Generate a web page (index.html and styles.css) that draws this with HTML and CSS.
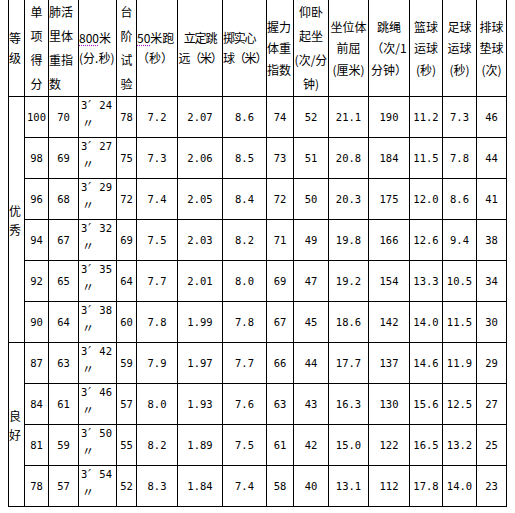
FILE: index.html
```html
<!DOCTYPE html>
<html lang="zh-CN">
<head>
<meta charset="utf-8">
<title>体质测试评分标准</title>
<link rel="stylesheet" href="styles.css">
</head>
<body>
<table class="grid">
  <colgroup>
    <col class="c16"><col class="c24"><col class="c30"><col class="c38"><col class="c20">
    <col class="c41"><col class="c45"><col class="c44"><col class="c27"><col class="c35">
    <col class="c40"><col class="c41"><col class="c33"><col class="c34"><col class="c30">
  </colgroup>
  <thead>
    <tr class="head">
      <th class="h2 left">等<br>级</th>
      <th class="h4">单<br>项<br>得<br>分</th>
      <th class="h4 left">肺活<br>里体<br>重指<br>数</th>
      <th class="h2 left"><span class="squig">800</span>米<br>(分.秒)</th>
      <th class="h4">台<br>阶<br>试<br>验</th>
      <th class="h2 left"><span class="squig">50</span>米跑<br>（秒）</th>
      <th class="h2 tight">立定跳<br>远（米）</th>
      <th class="h2 tight left">掷实心<br>球（米）</th>
      <th class="h3 left">握力<br>体重<br>指数</th>
      <th class="h4">仰卧<br>起坐<br>(次/分<br>钟)</th>
      <th class="h3">坐位体<br>前屈<br>(厘米)</th>
      <th class="h3">跳绳<br>（次/1<br>分钟）</th>
      <th class="h3">篮球<br>运球<br>(秒)</th>
      <th class="h3">足球<br>运球<br>(秒)</th>
      <th class="h3">排球<br>垫球<br>(次)</th>
    </tr>
  </thead>
  <tbody>
    <tr><td class="grade" rowspan="6">优<br>秀</td><td>100</td><td>70</td><td class="time">3<span class="p1">′</span>24<br><span class="p2">〃</span></td><td>78</td><td>7.2</td><td>2.07</td><td>8.6</td><td>74</td><td>52</td><td>21.1</td><td>190</td><td>11.2</td><td>7.3</td><td>46</td></tr>
    <tr><td>98</td><td>69</td><td class="time">3<span class="p1">′</span>27<br><span class="p2">〃</span></td><td>75</td><td>7.3</td><td>2.06</td><td>8.5</td><td>73</td><td>51</td><td>20.8</td><td>184</td><td>11.5</td><td>7.8</td><td>44</td></tr>
    <tr><td>96</td><td>68</td><td class="time">3<span class="p1">′</span>29<br><span class="p2">〃</span></td><td>72</td><td>7.4</td><td>2.05</td><td>8.4</td><td>72</td><td>50</td><td>20.3</td><td>175</td><td>12.0</td><td>8.6</td><td>41</td></tr>
    <tr><td>94</td><td>67</td><td class="time">3<span class="p1">′</span>32<br><span class="p2">〃</span></td><td>69</td><td>7.5</td><td>2.03</td><td>8.2</td><td>71</td><td>49</td><td>19.8</td><td>166</td><td>12.6</td><td>9.4</td><td>38</td></tr>
    <tr><td>92</td><td>65</td><td class="time">3<span class="p1">′</span>35<br><span class="p2">〃</span></td><td>64</td><td>7.7</td><td>2.01</td><td>8.0</td><td>69</td><td>47</td><td>19.2</td><td>154</td><td>13.3</td><td>10.5</td><td>34</td></tr>
    <tr><td>90</td><td>64</td><td class="time">3<span class="p1">′</span>38<br><span class="p2">〃</span></td><td>60</td><td>7.8</td><td>1.99</td><td>7.8</td><td>67</td><td>45</td><td>18.6</td><td>142</td><td>14.0</td><td>11.5</td><td>30</td></tr>
    <tr><td class="grade" rowspan="4">良<br>好</td><td>87</td><td>63</td><td class="time">3<span class="p1">′</span>42<br><span class="p2">〃</span></td><td>59</td><td>7.9</td><td>1.97</td><td>7.7</td><td>66</td><td>44</td><td>17.7</td><td>137</td><td>14.6</td><td>11.9</td><td>29</td></tr>
    <tr><td>84</td><td>61</td><td class="time">3<span class="p1">′</span>46<br><span class="p2">〃</span></td><td>57</td><td>8.0</td><td>1.93</td><td>7.6</td><td>63</td><td>43</td><td>16.3</td><td>130</td><td>15.6</td><td>12.5</td><td>27</td></tr>
    <tr><td>81</td><td>59</td><td class="time">3<span class="p1">′</span>50<br><span class="p2">〃</span></td><td>55</td><td>8.2</td><td>1.89</td><td>7.5</td><td>61</td><td>42</td><td>15.0</td><td>122</td><td>16.5</td><td>13.2</td><td>25</td></tr>
    <tr><td>78</td><td>57</td><td class="time">3<span class="p1">′</span>54<br><span class="p2">〃</span></td><td>52</td><td>8.3</td><td>1.84</td><td>7.4</td><td>58</td><td>40</td><td>13.1</td><td>112</td><td>17.8</td><td>14.0</td><td>23</td></tr>
  </tbody>
</table>
</body>
</html>
```

FILE: styles.css
```css
html, body {
  margin: 0;
  padding: 0;
  background: #ffffff;
}

body {
  padding-left: 8px;
  color: #000000;
  font-family: "Noto Sans CJK SC", "Noto Sans", sans-serif;
}

.grid {
  border-collapse: collapse;
  table-layout: fixed;
  width: 499px;
  margin-top: -1px;
}

.c16 { width: 16px; }
.c20 { width: 20px; }
.c24 { width: 24px; }
.c27 { width: 27px; }
.c30 { width: 30px; }
.c33 { width: 33px; }
.c34 { width: 34px; }
.c35 { width: 35px; }
.c38 { width: 38px; }
.c40 { width: 40px; }
.c41 { width: 41px; }
.c44 { width: 44px; }
.c45 { width: 45px; }

.grid th,
.grid td {
  border: 1px solid #000000;
  padding: 0;
  overflow: visible;
}

.head {
  height: 97px;
}

.grid th {
  font-weight: normal;
  font-size: 12px;
  text-align: center;
  vertical-align: middle;
  white-space: nowrap;
}

.grid th.left {
  text-align: left;
}

.h2 {
  line-height: 20px;
  padding-top: 8px;
}

.h3 {
  line-height: 21.5px;
  padding-top: 8px;
}

.h4 {
  line-height: 24px;
}

.tight {
  letter-spacing: -1.2px;
}

.squig {
  text-decoration: underline dotted #a020c0;
  text-underline-offset: 2px;
}

.grid tbody tr {
  height: 40.9px;
}

.grid td {
  font-family: "DejaVu Sans Mono", "Liberation Mono", monospace;
  font-size: 10.5px;
  text-align: center;
  vertical-align: middle;
  white-space: nowrap;
}

.grid td.time {
  text-align: left;
  padding-left: 2px;
  line-height: 17px;
  padding-bottom: 4px;
}

.p1 {
  display: inline-block;
  width: 11px;
  font-family: "DejaVu Sans", sans-serif;
  font-size: 12px;
  font-style: italic;
  text-align: left;
  padding-left: 1px;
}

.p2 {
  display: inline-block;
  width: 14px;
  font-family: "Noto Sans CJK SC", sans-serif;
  font-size: 12px;
  text-align: center;
  line-height: 17px;
}

.grid td.grade {
  font-family: "Noto Sans CJK SC", sans-serif;
  font-size: 12px;
  line-height: 19px;
  text-align: left;
}
```
